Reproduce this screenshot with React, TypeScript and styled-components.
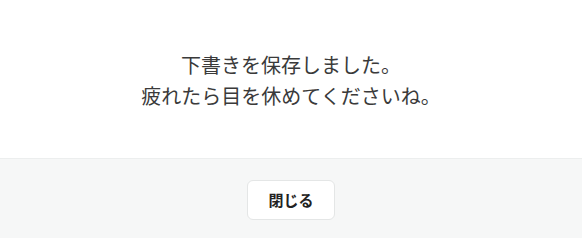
import React from "react";
import styled, { createGlobalStyle } from "styled-components";

const Global = createGlobalStyle`
  html, body { margin: 0; padding: 0; background: #ffffff; }
  body { font-family: "Noto Sans CJK JP", "Noto Sans", sans-serif; }
`;

const Dialog = styled.div`
  width: 582px;
  height: 238px;
  display: flex;
  flex-direction: column;
  background: #ffffff;
`;

const Body = styled.div`
  height: 158px;
  display: flex;
  align-items: center;
  justify-content: center;
  border-bottom: 1px solid #eceeee;
`;

const Message = styled.p`
  margin: 0;
  padding-top: 1px;
  text-align: center;
  font-size: 20px;
  line-height: 31px;
  color: #3a3a3a;
  font-weight: 400;
`;

const Footer = styled.div`
  flex: 1;
  display: flex;
  align-items: center;
  justify-content: center;
  background: #f6f7f7;
`;

const Button = styled.button`
  width: 88px;
  height: 40px;
  margin-top: 2px;
  border: 1px solid #e4e6e6;
  border-radius: 6px;
  background: #ffffff;
  font-family: "Noto Sans CJK JP", "Noto Sans", sans-serif;
  font-size: 15px;
  font-weight: 700;
  color: #222222;
  cursor: pointer;
`;

export default function App() {
  return (
    <>
      <Global />
      <Dialog>
        <Body>
          <Message>
            下書きを保存しました。
            <br />
            疲れたら目を休めてくださいね。
          </Message>
        </Body>
        <Footer>
          <Button>閉じる</Button>
        </Footer>
      </Dialog>
    </>
  );
}
